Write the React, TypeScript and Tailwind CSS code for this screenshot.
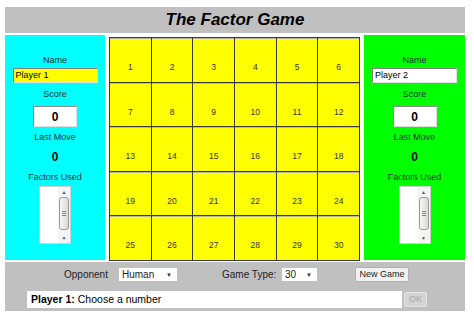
import React from 'react'

const numbers = Array.from({ length: 30 }, (_, i) => i + 1)

function ListBox() {
  return (
    <div className="mt-[3px] flex h-[58px] w-[32px] border border-[#d0d0d0] bg-white">
      <div className="flex-1" />
      <div className="flex w-[12px] flex-col items-center bg-[#f4f4f4]">
        <div className="flex h-[10px] items-center justify-center text-[5px] leading-none text-[#555]">▲</div>
        <div className="flex h-[33px] w-[10px] flex-col items-center justify-center gap-px rounded-[3px] border border-[#9a9a9a] bg-gradient-to-r from-[#f8f8f8] to-[#d8d8d8]">
          <div className="h-px w-[4px] bg-[#888]" />
          <div className="h-px w-[4px] bg-[#888]" />
          <div className="h-px w-[4px] bg-[#888]" />
        </div>
        <div className="mt-auto flex h-[10px] items-center justify-center text-[5px] leading-none text-[#555]">▼</div>
      </div>
    </div>
  )
}

function PlayerPanel({ name, bg, inputBg }: { name: string; bg: string; inputBg: string }) {
  return (
    <div className={`flex h-[225px] flex-col items-center pt-[19px] ${bg}`}>
      <div className="h-[12px] text-[9px] leading-[12px] text-[#1f2f2f]">Name</div>
      <div className={`mt-[2px] h-[15px] w-[85px] border border-t-[#808080] border-l-[#808080] border-r-[#e0e0e0] border-b-[#e0e0e0] px-[2px] text-[9px] leading-[13px] text-black ${inputBg}`}>
        {name}
      </div>
      <div className="mt-[5px] h-[12px] text-[9px] leading-[12px] text-[#1f2f2f]">Score</div>
      <div className="mt-[6px] flex h-[21px] w-[44px] items-center justify-center border border-t-[#8a8a8a] border-l-[#8a8a8a] border-r-[#dcdcdc] border-b-[#dcdcdc] bg-white text-[12px] font-bold text-black">
        0
      </div>
      <div className="mt-[4px] h-[12px] text-[9px] leading-[12px] text-[#1f2f2f]">Last Move</div>
      <div className="mt-[6px] h-[16px] text-[12px] font-bold leading-[16px] text-[#111]">0</div>
      <div className="mt-[6px] h-[12px] text-[9px] leading-[12px] text-[#1f2f2f]">Factors Used</div>
      <ListBox />
    </div>
  )
}

function Select({ value, width }: { value: string; width: string }) {
  return (
    <div className={`flex h-[13px] items-center justify-between bg-white pl-[3px] pr-[5px] text-[10px] text-[#222] ${width}`}>
      <span>{value}</span>
      <span className="text-[6px] leading-none text-[#333]">▼</span>
    </div>
  )
}

export default function App() {
  return (
    <div className="min-h-[319px] bg-white pt-[7px] font-['Liberation_Sans',Arial,sans-serif]">
      <div className="ml-[5px] w-[460px]">
        <div className="flex h-[26px] items-center justify-center bg-[#c0c0c0]">
          <h1 className="text-[17px] font-bold italic text-black">The Factor Game</h1>
        </div>

        <div className="mt-[2px] flex h-[227px] gap-[4px]">
          <div className="w-[100px]">
            <PlayerPanel name="Player 1" bg="bg-[#00ffff]" inputBg="bg-[#ffff00]" />
          </div>

          <div className="mt-[2px] grid h-[224px] w-[251px] grid-cols-6 grid-rows-5 gap-px bg-[#3a3a3a] p-px">
            {numbers.map(n => (
              <div
                key={n}
                className="flex items-center justify-center border-t border-[#b8b8a0] bg-[#ffff00] pt-[14px] text-[8.5px] text-[#333]"
              >
                {n}
              </div>
            ))}
          </div>

          <div className="w-[101px]">
            <PlayerPanel name="Player 2" bg="bg-[#00ff00]" inputBg="bg-white" />
          </div>
        </div>

        <div className="h-[49px] bg-[#c0c0c0] pt-[5px]">
          <div className="flex h-[15px] items-center">
            <span className="ml-[59px] w-[55px] text-[10px] text-[#222]">Opponent</span>
            <Select value="Human" width="w-[58px]" />
            <span className="ml-[45px] w-[60px] text-[10px] text-[#222]">Game Type:</span>
            <Select value="30" width="w-[35px]" />
            <button className="ml-[38px] h-[15px] w-[54px] rounded-[2px] border border-[#b0b0b0] bg-[#f2f2f2] text-[9px] leading-none text-[#222]">
              New Game
            </button>
          </div>
          <div className="mt-[9px] flex h-[17px] items-center">
            <div className="ml-[22px] flex h-[17px] w-[375px] items-center bg-white pl-[4px] text-[10.5px] text-black">
              <span className="font-bold">Player 1:</span>
              <span className="ml-[3px]">Choose a number</span>
            </div>
            <button className="ml-[2px] h-[15px] w-[23px] rounded-[2px] border border-[#e4e4e4] bg-[#d4d4d4] text-[9px] leading-none text-[#a8a8a8]">
              OK
            </button>
          </div>
        </div>
      </div>
    </div>
  )
}
